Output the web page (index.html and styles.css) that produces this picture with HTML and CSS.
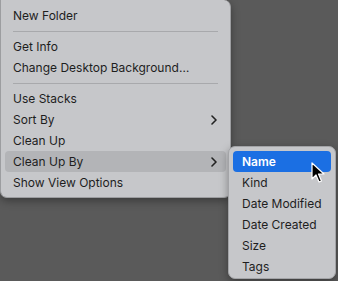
FILE: index.html
```html
<!DOCTYPE html>
<html lang="en">
<head>
<meta charset="utf-8">
<title>Desktop context menu</title>
<link rel="stylesheet" href="styles.css">
</head>
<body>
	<div class="menu">
		<div class="item">New Folder</div>
		<div class="sep"></div>
		<div class="item">Get Info</div>
		<div class="item">Change Desktop Background…</div>
		<div class="sep"></div>
		<div class="item">Use Stacks</div>
		<div class="item">Sort By
			<svg class="chev" width="6" height="10" viewBox="0 0 6 10"><path d="M1 1 L5 5 L1 9" fill="none" stroke="#222" stroke-width="1.6" stroke-linecap="round" stroke-linejoin="round"/></svg>
		</div>
		<div class="item">Clean Up</div>
		<div class="item open">Clean Up By
			<svg class="chev" width="6" height="10" viewBox="0 0 6 10"><path d="M1 1 L5 5 L1 9" fill="none" stroke="#222" stroke-width="1.6" stroke-linecap="round" stroke-linejoin="round"/></svg>
		</div>
		<div class="item">Show View Options</div>
	</div>

	<div class="submenu">
		<div class="item active">Name</div>
		<div class="item">Kind</div>
		<div class="item">Date Modified</div>
		<div class="item">Date Created</div>
		<div class="item">Size</div>
		<div class="item">Tags</div>
	</div>

	<svg class="cursor" width="14" height="22" viewBox="0 0 14 22">
		<path d="M1 1 L1 17 L5 13 L8 20 L10.5 19 L7.5 12 L13 12 Z" fill="#000" stroke="#fff" stroke-width="1.2" stroke-linejoin="round"/>
	</svg>
</body>
</html>
```

FILE: styles.css
```css
body
{
    margin: 0;
    background: #5a5a5a;
    font-family: Inter, "Liberation Sans", sans-serif;
    font-size: 12px;
    color: #1e1e1e;
    width: 338px;
    height: 281px;
    overflow: hidden;
}
.menu
{
    width: 221px;
    padding: 5px 4px 4px;
    background: #c6c7ca;
    border: 1px solid #9c9da0;
    border-top: 0;
    border-radius: 0 7px 7px 7px;
    box-shadow: 0 3px 8px rgba(0, 0, 0, 0.35);
}
.item
{
    height: 21px;
    line-height: 21px;
    padding: 0 8px;
    border-radius: 4px;
    display: flex;
    align-items: center;
    justify-content: space-between;
    white-space: nowrap;
}
.item.open
{
    background: #b3b4b7;
}
.chev
{
    margin-right: 1px;
}
.sep
{
    height: 1px;
    background: #a8a9ac;
    margin: 5px 8px 4px;
}
.submenu
{
    position: absolute;
    left: 228px;
    top: 146px;
    width: 98px;
    padding: 4px 4px 1px;
    background: #c6c7ca;
    border: 1px solid #a3a4a7;
    border-radius: 7px;
    box-shadow: 0 3px 8px rgba(0, 0, 0, 0.35);
}
.submenu .item
{
    padding: 0 9px;
}
.submenu .active
{
    background: #1b6fe3;
    color: white;
    font-weight: 600;
}
.cursor
{
    position: absolute;
    left: 311px;
    top: 162px;
}
```
